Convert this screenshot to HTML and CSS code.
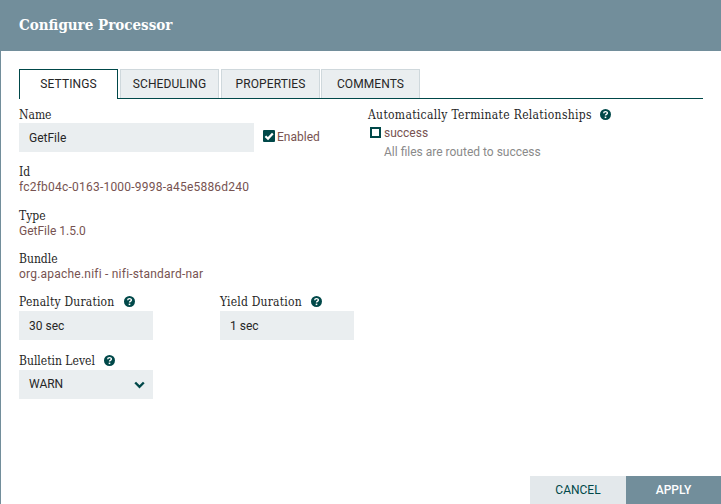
FILE: index.html
```html
<!DOCTYPE html>
<html lang="en">
<head>
  <meta charset="UTF-8">
  <title>Configure Processor</title>
  <link rel="stylesheet" href="styles.css">
</head>
<body>
  <div class="dialog">
    <div class="dialog-header">Configure Processor</div>

    <div class="dialog-content">
      <div class="tabs">
        <div class="tab tab-active">SETTINGS</div>
        <div class="tab">SCHEDULING</div>
        <div class="tab">PROPERTIES</div>
        <div class="tab">COMMENTS</div>
      </div>

      <div class="columns">
        <div class="col-left">
          <div class="name-row">
            <div>
              <div class="label">Name</div>
              <div class="input input-name">GetFile</div>
            </div>
            <div class="enabled">
              <svg class="check" width="12" height="12" viewBox="0 0 12 12"><rect width="12" height="12" rx="1" fill="#004849"/><path d="M2.4 6.2 L5 8.6 L9.8 3.4" fill="none" stroke="#fff" stroke-width="2.2"/></svg>
              <span>Enabled</span>
            </div>
          </div>

          <div class="info info-id">
            <div class="label">Id</div>
            <div class="value">fc2fb04c-0163-1000-9998-a45e5886d240</div>
          </div>
          <div class="info info-type">
            <div class="label">Type</div>
            <div class="value">GetFile 1.5.0</div>
          </div>
          <div class="info info-bundle">
            <div class="label">Bundle</div>
            <div class="value">org.apache.nifi - nifi-standard-nar</div>
          </div>

          <div class="duration-row">
            <div class="duration">
              <div class="label">Penalty Duration
                <svg class="help" width="11" height="11" viewBox="0 0 11 11"><circle cx="5.5" cy="5.5" r="5.5" fill="#004849"/><path d="M3.7 4.3 C3.7 2 7.4 2.1 7.4 4.1 C7.4 5.4 5.5 5.3 5.5 6.6" fill="none" stroke="#fff" stroke-width="1.4"/><rect x="4.7" y="7.6" width="1.6" height="1.5" fill="#fff"/></svg>
              </div>
              <div class="input input-small">30 sec</div>
            </div>
            <div class="duration">
              <div class="label">Yield Duration
                <svg class="help" width="11" height="11" viewBox="0 0 11 11"><circle cx="5.5" cy="5.5" r="5.5" fill="#004849"/><path d="M3.7 4.3 C3.7 2 7.4 2.1 7.4 4.1 C7.4 5.4 5.5 5.3 5.5 6.6" fill="none" stroke="#fff" stroke-width="1.4"/><rect x="4.7" y="7.6" width="1.6" height="1.5" fill="#fff"/></svg>
              </div>
              <div class="input input-small">1 sec</div>
            </div>
          </div>

          <div class="bulletin">
            <div class="label">Bulletin Level
              <svg class="help" width="11" height="11" viewBox="0 0 11 11"><circle cx="5.5" cy="5.5" r="5.5" fill="#004849"/><path d="M3.7 4.3 C3.7 2 7.4 2.1 7.4 4.1 C7.4 5.4 5.5 5.3 5.5 6.6" fill="none" stroke="#fff" stroke-width="1.4"/><rect x="4.7" y="7.6" width="1.6" height="1.5" fill="#fff"/></svg>
            </div>
            <div class="input input-small input-select">
              <span>WARN</span>
              <svg width="11" height="8" viewBox="0 0 11 8"><path d="M1.2 1.5 L5.5 5.8 L9.8 1.5" fill="none" stroke="#004849" stroke-width="2.4"/></svg>
            </div>
          </div>
        </div>

        <div class="col-right">
          <div class="label">Automatically Terminate Relationships
            <svg class="help help-wide" width="11" height="11" viewBox="0 0 11 11"><circle cx="5.5" cy="5.5" r="5.5" fill="#004849"/><path d="M3.7 4.3 C3.7 2 7.4 2.1 7.4 4.1 C7.4 5.4 5.5 5.3 5.5 6.6" fill="none" stroke="#fff" stroke-width="1.4"/><rect x="4.7" y="7.6" width="1.6" height="1.5" fill="#fff"/></svg>
          </div>
          <div class="relationship">
            <span class="box"></span>
            <span>success</span>
          </div>
          <div class="rel-desc">All files are routed to success</div>
        </div>
      </div>
    </div>

    <div class="dialog-footer">
      <div class="btn btn-cancel">CANCEL</div>
      <div class="btn btn-apply">APPLY</div>
    </div>
  </div>
</body>
</html>
```

FILE: styles.css
```css
html, body {
  margin: 0;
  padding: 0;
  height: 100%;
}
body {
  background-color: #fff;
  font-family: Roboto, sans-serif;
  font-size: 12px;
  overflow: hidden;
}
.dialog {
  height: 504px;
  display: flex;
  flex-direction: column;
  box-sizing: border-box;
  border-left: 1px solid #728e9b;
}
.dialog-header {
  height: 51px;
  margin-left: -1px;
  padding-left: 19px;
  line-height: 51px;
  background-color: #728e9b;
  color: #fff;
  font-family: "DejaVu Serif Condensed", "DejaVu Serif", serif;
  font-size: 15px;
  font-weight: bold;
}
.dialog-content {
  flex: 1;
  padding: 18px 18px 0 18px;
}
.tabs {
  display: flex;
  height: 29px;
  border-bottom: 1px solid #004849;
}
.tab {
  width: 99px;
  height: 29px;
  margin-right: 2px;
  box-sizing: border-box;
  border: 1px solid #cfd8dc;
  border-bottom: none;
  background-color: #eaeef0;
  color: #262626;
  line-height: 29px;
  text-align: center;
  font-size: 12px;
  letter-spacing: 0.1px;
}
.tab:nth-child(3) {
  margin-right: 1px;
}
.tab-active {
  height: 30px;
  border: 1px solid #004849;
  border-bottom: none;
  background-color: #fff;
}
.columns {
  display: flex;
}
.col-left {
  width: 349px;
  padding-top: 8px;
}
.col-right {
  padding-top: 8px;
}
.label {
  height: 16px;
  line-height: 16px;
  color: #262626;
  font-family: "DejaVu Serif Condensed", "DejaVu Serif", serif;
  font-size: 12px;
}
.value {
  height: 15px;
  line-height: 15px;
  color: #775351;
  font-size: 12px;
  letter-spacing: 0.22px;
}
.name-row {
  display: flex;
}
.input {
  background-color: #eaeef0;
  color: #262626;
  height: 29px;
  line-height: 31px;
  padding-left: 10px;
  box-sizing: border-box;
  font-size: 12px;
}
.input-name {
  width: 235px;
}
.input-small {
  width: 134px;
}
.input-select {
  display: flex;
  align-items: center;
  justify-content: space-between;
  padding-right: 8px;
}
.enabled {
  display: flex;
  align-items: center;
  margin: 22px 0 0 9px;
  height: 14px;
  color: #775351;
}
.enabled span {
  margin-top: 2px;
}
.check {
  margin-right: 2px;
}
.info {
  margin-top: 13px;
}
.info-id {
  margin-top: 12px;
}
.info-type .value {
  letter-spacing: 0;
}
.info-bundle {
  margin-top: 12px;
}
.duration-row {
  display: flex;
  gap: 67px;
  margin-top: 12px;
}
.duration .label {
  height: 17px;
  letter-spacing: 0.2px;
}
.bulletin {
  margin-top: 13px;
}
.bulletin .label {
  height: 17px;
}
.col-right .label {
  letter-spacing: 0.32px;
}
.help {
  margin-left: 6px;
  vertical-align: -1px;
}
.help-wide {
  margin-left: 4px;
}
.relationship {
  display: flex;
  align-items: center;
  height: 18px;
  margin: 1px 0 0 2px;
  color: #775351;
}
.box {
  width: 11px;
  height: 11px;
  margin: -2px 3px 0 0;
  box-sizing: border-box;
  border: 2px solid #004849;
}
.rel-desc {
  margin: 2px 0 0 16px;
  height: 17px;
  line-height: 17px;
  color: #8a8a8a;
}
.dialog-footer {
  display: flex;
  justify-content: flex-end;
  height: 28px;
}
.btn {
  width: 96px;
  line-height: 28px;
  text-align: center;
  font-size: 12px;
}
.btn-cancel {
  background-color: #e3e8eb;
  color: #004849;
}
.btn-apply {
  width: 95px;
  background-color: #728e9b;
  color: #fff;
  font-weight: 500;
}
```
